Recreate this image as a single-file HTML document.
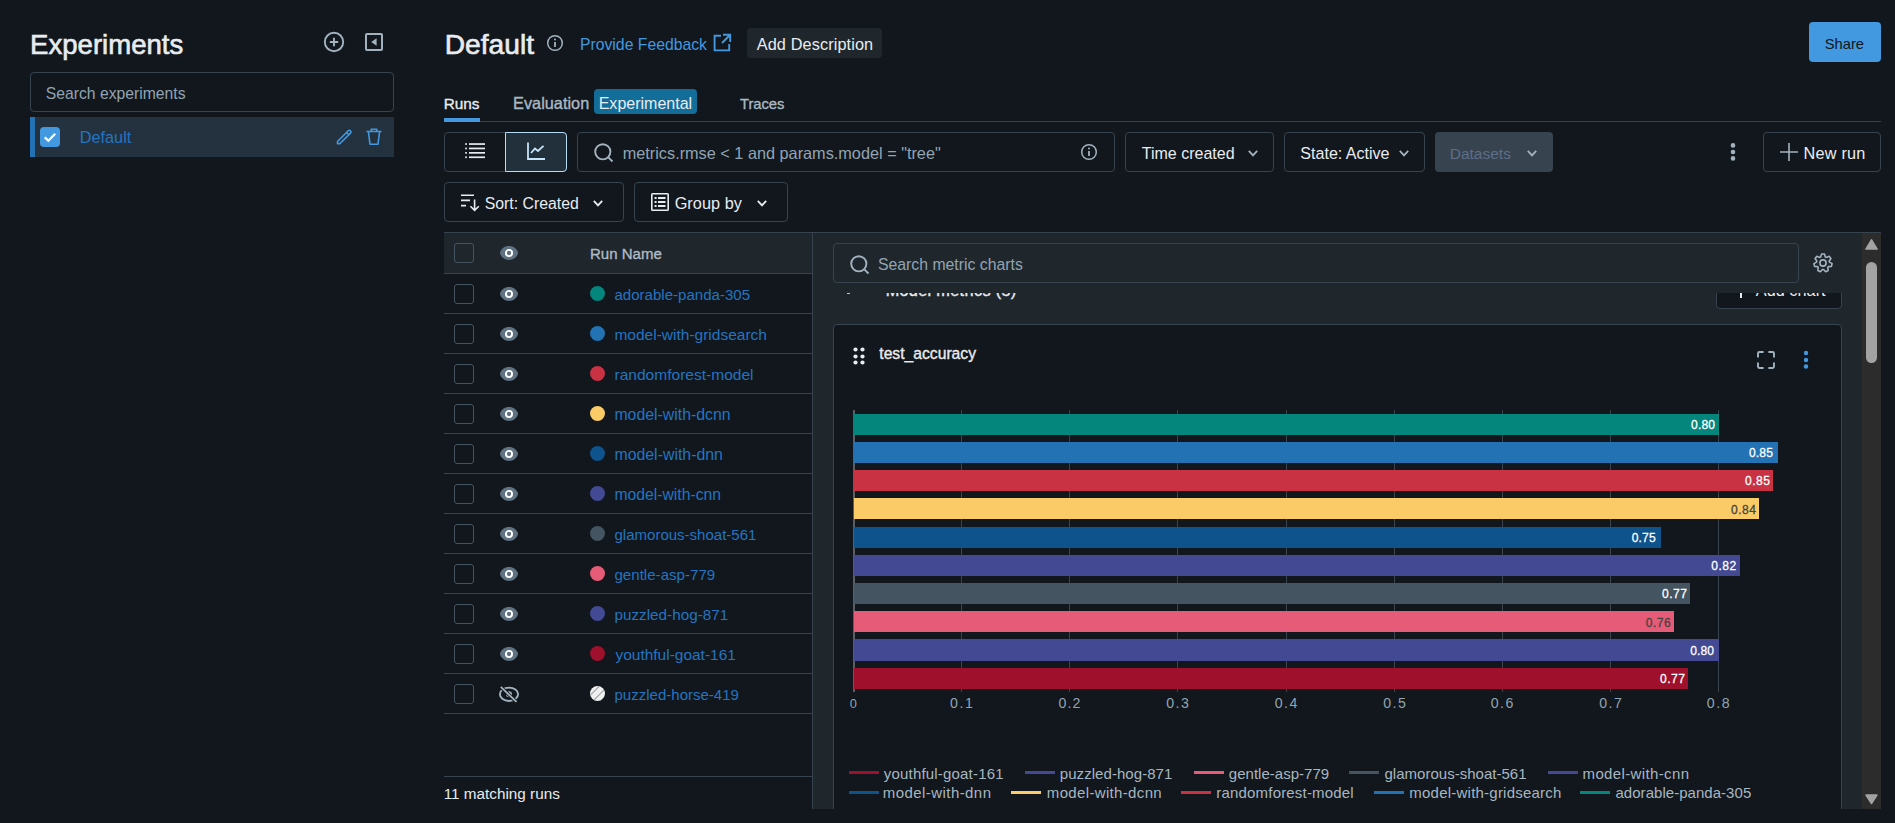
<!DOCTYPE html>
<html><head><meta charset="utf-8"><title>MLflow Experiments</title>
<style>
html,body{margin:0;padding:0;width:1895px;height:823px;overflow:hidden;background:#11171c;font-family:"Liberation Sans",sans-serif;}
.a{position:absolute;display:block}
.t{position:absolute;white-space:pre;line-height:1}
</style></head><body>
<svg class="a" style="left:323px;top:31px;" width="22" height="22" viewBox="0 0 22 22"><circle cx="11" cy="11" r="9.2" fill="none" stroke="#a2b2be" stroke-width="1.9"/><path d="M6.8 11H15.2M11 6.8V15.2" stroke="#a2b2be" stroke-width="1.9"/></svg>
<svg class="a" style="left:364px;top:32px;" width="20" height="20" viewBox="0 0 20 20"><rect x="2" y="2" width="16" height="16" rx="1" fill="none" stroke="#a2b2be" stroke-width="2"/><path d="M7.2 10L12.6 6.2V13.8Z" fill="#a2b2be"/></svg>
<div class="a" style="left:30px;top:72px;width:364px;height:40px;box-sizing:border-box;border:1px solid #37444f;border-radius:4px"></div>
<div class="a" style="left:30px;top:117px;width:364px;height:40px;background:#24323f"></div>
<div class="a" style="left:30px;top:117px;width:5px;height:40px;background:#2272b4"></div>
<div class="a" style="left:40px;top:127px;width:20px;height:20px;background:#4299e0;border-radius:4px"></div>
<svg class="a" style="left:40px;top:127px;" width="20" height="20" viewBox="0 0 20 20"><path d="M4.8 10.4L8.4 13.8L15.2 6.8" fill="none" stroke="#fff" stroke-width="2.2"/></svg>
<svg class="a" style="left:335px;top:127px;" width="18" height="19" viewBox="0 0 18 19"><path d="M2.5 14.5L13.2 3.8a1.6 1.6 0 0 1 2.3 2.3L4.8 16.8H2.5Z M11.5 5.5L13.8 7.8" fill="none" stroke="#4299e0" stroke-width="1.6" stroke-linejoin="round"/></svg>
<svg class="a" style="left:365px;top:127px;" width="18" height="19" viewBox="0 0 18 19"><path d="M1.5 4.5H16.5 M6.2 4.5V2.2H11.8V4.5 M3.4 4.5L5 17.2H13L14.6 4.5" fill="none" stroke="#4299e0" stroke-width="1.6" stroke-linejoin="round"/></svg>
<svg class="a" style="left:546px;top:34px;" width="18" height="18" viewBox="0 0 18 18"><circle cx="9" cy="9" r="7.3" fill="none" stroke="#a2b2be" stroke-width="1.5"/><path d="M9 8V13" stroke="#a2b2be" stroke-width="1.8"/><circle cx="9" cy="5.6" r="1" fill="#a2b2be"/></svg>
<svg class="a" style="left:712px;top:33px;" width="20" height="20" viewBox="0 0 20 20"><path d="M9 2.8H2.6V17.4H17.2V11 M11 1.8H18.2V9 M18 2L10 10" fill="none" stroke="#4299e0" stroke-width="1.9"/></svg>
<div class="a" style="left:747px;top:28px;width:135px;height:30px;background:#1f272d;border-radius:4px"></div>
<div class="a" style="left:1809px;top:22px;width:72px;height:40px;background:#4299e0;border-radius:4px"></div>
<div class="a" style="left:594px;top:89px;width:103px;height:25px;background:#136d99;border-radius:4px"></div>
<div class="a" style="left:444px;top:121px;width:1437px;height:1px;background:#37444f"></div>
<div class="a" style="left:444px;top:118px;width:36px;height:4px;background:#4299e0"></div>
<div class="a" style="left:444px;top:132px;width:123px;height:40px;box-sizing:border-box;border:1px solid #37444f;border-radius:4px"></div>
<div class="a" style="left:505px;top:132px;width:62px;height:40px;box-sizing:border-box;background:#22303c;border:1px solid #b6dcf4;border-radius:0 4px 4px 0"></div>
<svg class="a" style="left:463px;top:141px;" width="24" height="20" viewBox="0 0 24 20"><g fill="#e8ecf0"><rect x="2.2" y="2.2" width="1.7" height="1.7"/><rect x="2.2" y="6.6" width="1.7" height="1.7"/><rect x="2.2" y="11" width="1.7" height="1.7"/><rect x="2.2" y="15.4" width="1.7" height="1.7"/><rect x="6" y="2.2" width="16" height="1.7"/><rect x="6" y="6.6" width="16" height="1.7"/><rect x="6" y="11" width="16" height="1.7"/><rect x="6" y="15.4" width="16" height="1.7"/></g></svg>
<svg class="a" style="left:525px;top:140px;" width="22" height="22" viewBox="0 0 22 22"><path d="M3 2.5V19H20 M6 13L10 8.5L13 11L18.5 5.8" fill="none" stroke="#c5e5fa" stroke-width="1.8"/></svg>
<div class="a" style="left:577px;top:132px;width:538px;height:40px;box-sizing:border-box;border:1px solid #37444f;border-radius:4px"></div>
<svg class="a" style="left:592px;top:141px;" width="24" height="24" viewBox="0 0 24 24"><circle cx="10.8" cy="10.8" r="7.6" fill="none" stroke="#a2b2be" stroke-width="1.9"/><path d="M16.3 16.3L20.5 20.5" stroke="#a2b2be" stroke-width="1.9"/></svg>
<svg class="a" style="left:1080px;top:143px;" width="18" height="18" viewBox="0 0 18 18"><circle cx="9" cy="9" r="7.3" fill="none" stroke="#a2b2be" stroke-width="1.5"/><path d="M9 8V13" stroke="#a2b2be" stroke-width="1.8"/><circle cx="9" cy="5.6" r="1" fill="#a2b2be"/></svg>
<div class="a" style="left:1125px;top:132px;width:149px;height:40px;box-sizing:border-box;border:1px solid #37444f;border-radius:4px"></div>
<svg class="a" style="left:1247px;top:149px;" width="12" height="8" viewBox="0 0 12 8"><path d="M1.8 1.8L6.0 6.4L10.2 1.8" fill="none" stroke="#a2b2be" stroke-width="1.8"/></svg>
<div class="a" style="left:1284px;top:132px;width:141px;height:40px;box-sizing:border-box;border:1px solid #37444f;border-radius:4px"></div>
<svg class="a" style="left:1398px;top:149px;" width="12" height="8" viewBox="0 0 12 8"><path d="M1.8 1.8L6.0 6.4L10.2 1.8" fill="none" stroke="#a2b2be" stroke-width="1.8"/></svg>
<div class="a" style="left:1435px;top:132px;width:118px;height:40px;background:#37444f;border-radius:4px"></div>
<svg class="a" style="left:1526px;top:149px;" width="12" height="8" viewBox="0 0 12 8"><path d="M1.8 1.8L6.0 6.4L10.2 1.8" fill="none" stroke="#a6b3be" stroke-width="1.8"/></svg>
<svg class="a" style="left:1729px;top:141px;" width="8" height="22" viewBox="0 0 8 22"><circle cx="4" cy="4.4" r="2.3" fill="#a2b2be"/><circle cx="4" cy="11" r="2.3" fill="#a2b2be"/><circle cx="4" cy="17.4" r="2.3" fill="#a2b2be"/></svg>
<div class="a" style="left:1763px;top:132px;width:118px;height:40px;box-sizing:border-box;border:1px solid #37444f;border-radius:4px"></div>
<svg class="a" style="left:1779px;top:142px;" width="20" height="20" viewBox="0 0 20 20"><path d="M10 1V19M1 10H19" stroke="#a2b2be" stroke-width="1.6"/></svg>
<div class="a" style="left:444px;top:182px;width:180px;height:40px;box-sizing:border-box;border:1px solid #37444f;border-radius:4px"></div>
<svg class="a" style="left:460px;top:193px;" width="21" height="20" viewBox="0 0 21 20"><path d="M1 2.2H14 M1 7.4H10 M1 12.6H6 M14.6 6.6V17.6 M10.4 13.2L14.6 17.4L18.8 13.2" fill="none" stroke="#e8ecf0" stroke-width="1.6"/></svg>
<svg class="a" style="left:592px;top:199px;" width="12" height="8" viewBox="0 0 12 8"><path d="M1.8 1.8L6.0 6.4L10.2 1.8" fill="none" stroke="#e8ecf0" stroke-width="1.8"/></svg>
<div class="a" style="left:634px;top:182px;width:154px;height:40px;box-sizing:border-box;border:1px solid #37444f;border-radius:4px"></div>
<svg class="a" style="left:650px;top:192px;" width="20" height="20" viewBox="0 0 20 20"><rect x="1.8" y="1.8" width="16.4" height="16.4" rx="0.8" fill="none" stroke="#e8ecf0" stroke-width="1.6"/><g fill="#e8ecf0"><rect x="4.6" y="5" width="2" height="2"/><rect x="4.6" y="9" width="2" height="2"/><rect x="4.6" y="13" width="2" height="2"/><rect x="8" y="5" width="7.5" height="2"/><rect x="8" y="9" width="7.5" height="2"/><rect x="8" y="13" width="7.5" height="2"/></g></svg>
<svg class="a" style="left:756px;top:199px;" width="12" height="8" viewBox="0 0 12 8"><path d="M1.8 1.8L6.0 6.4L10.2 1.8" fill="none" stroke="#e8ecf0" stroke-width="1.8"/></svg>
<div class="a" style="left:813px;top:233px;width:1068px;height:576px;background:#1f272d"></div>
<div class="a" style="left:444px;top:233px;width:368px;height:40px;background:#1f272d"></div>
<div class="a" style="left:444px;top:232px;width:1437px;height:1px;background:#37444f"></div>
<div class="a" style="left:812px;top:232px;width:1px;height:577px;background:#37444f"></div>
<div class="a" style="left:444px;top:273px;width:368px;height:1px;background:#37444f"></div>
<div class="a" style="left:444px;top:313px;width:368px;height:1px;background:#37444f"></div>
<div class="a" style="left:444px;top:353px;width:368px;height:1px;background:#37444f"></div>
<div class="a" style="left:444px;top:393px;width:368px;height:1px;background:#37444f"></div>
<div class="a" style="left:444px;top:433px;width:368px;height:1px;background:#37444f"></div>
<div class="a" style="left:444px;top:473px;width:368px;height:1px;background:#37444f"></div>
<div class="a" style="left:444px;top:513px;width:368px;height:1px;background:#37444f"></div>
<div class="a" style="left:444px;top:553px;width:368px;height:1px;background:#37444f"></div>
<div class="a" style="left:444px;top:593px;width:368px;height:1px;background:#37444f"></div>
<div class="a" style="left:444px;top:633px;width:368px;height:1px;background:#37444f"></div>
<div class="a" style="left:444px;top:673px;width:368px;height:1px;background:#37444f"></div>
<div class="a" style="left:444px;top:713px;width:368px;height:1px;background:#37444f"></div>
<div class="a" style="left:444px;top:776px;width:368px;height:1px;background:#37444f"></div>
<div class="a" style="left:454px;top:243px;width:20px;height:20px;box-sizing:border-box;border:1px solid #445461;border-radius:3px"></div>
<svg class="a" style="left:499px;top:245px;" width="20" height="16" viewBox="0 0 20 16"><path d="M0.9 8C2.2 3.6 5.6 1.1 10 1.1S17.8 3.6 19.1 8C17.8 12.4 14.4 14.9 10 14.9S2.2 12.4 0.9 8Z" fill="#5f7281"/><circle cx="10" cy="8" r="3.1" fill="none" stroke="#fff" stroke-width="1.9"/></svg>
<div class="a" style="left:454px;top:284px;width:20px;height:20px;box-sizing:border-box;border:1px solid #445461;border-radius:3px"></div>
<svg class="a" style="left:499px;top:286px;" width="20" height="16" viewBox="0 0 20 16"><path d="M0.9 8C2.2 3.6 5.6 1.1 10 1.1S17.8 3.6 19.1 8C17.8 12.4 14.4 14.9 10 14.9S2.2 12.4 0.9 8Z" fill="#5f7281"/><circle cx="10" cy="8" r="3.1" fill="none" stroke="#fff" stroke-width="1.9"/></svg>
<svg class="a" style="left:590px;top:286px;" width="15" height="15" viewBox="0 0 15 15"><circle cx="7.5" cy="7.5" r="7.5" fill="#04867d"/></svg>
<div class="a" style="left:454px;top:324px;width:20px;height:20px;box-sizing:border-box;border:1px solid #445461;border-radius:3px"></div>
<svg class="a" style="left:499px;top:326px;" width="20" height="16" viewBox="0 0 20 16"><path d="M0.9 8C2.2 3.6 5.6 1.1 10 1.1S17.8 3.6 19.1 8C17.8 12.4 14.4 14.9 10 14.9S2.2 12.4 0.9 8Z" fill="#5f7281"/><circle cx="10" cy="8" r="3.1" fill="none" stroke="#fff" stroke-width="1.9"/></svg>
<svg class="a" style="left:590px;top:326px;" width="15" height="15" viewBox="0 0 15 15"><circle cx="7.5" cy="7.5" r="7.5" fill="#2272b4"/></svg>
<div class="a" style="left:454px;top:364px;width:20px;height:20px;box-sizing:border-box;border:1px solid #445461;border-radius:3px"></div>
<svg class="a" style="left:499px;top:366px;" width="20" height="16" viewBox="0 0 20 16"><path d="M0.9 8C2.2 3.6 5.6 1.1 10 1.1S17.8 3.6 19.1 8C17.8 12.4 14.4 14.9 10 14.9S2.2 12.4 0.9 8Z" fill="#5f7281"/><circle cx="10" cy="8" r="3.1" fill="none" stroke="#fff" stroke-width="1.9"/></svg>
<svg class="a" style="left:590px;top:366px;" width="15" height="15" viewBox="0 0 15 15"><circle cx="7.5" cy="7.5" r="7.5" fill="#c83243"/></svg>
<div class="a" style="left:454px;top:404px;width:20px;height:20px;box-sizing:border-box;border:1px solid #445461;border-radius:3px"></div>
<svg class="a" style="left:499px;top:406px;" width="20" height="16" viewBox="0 0 20 16"><path d="M0.9 8C2.2 3.6 5.6 1.1 10 1.1S17.8 3.6 19.1 8C17.8 12.4 14.4 14.9 10 14.9S2.2 12.4 0.9 8Z" fill="#5f7281"/><circle cx="10" cy="8" r="3.1" fill="none" stroke="#fff" stroke-width="1.9"/></svg>
<svg class="a" style="left:590px;top:406px;" width="15" height="15" viewBox="0 0 15 15"><circle cx="7.5" cy="7.5" r="7.5" fill="#facb66"/></svg>
<div class="a" style="left:454px;top:444px;width:20px;height:20px;box-sizing:border-box;border:1px solid #445461;border-radius:3px"></div>
<svg class="a" style="left:499px;top:446px;" width="20" height="16" viewBox="0 0 20 16"><path d="M0.9 8C2.2 3.6 5.6 1.1 10 1.1S17.8 3.6 19.1 8C17.8 12.4 14.4 14.9 10 14.9S2.2 12.4 0.9 8Z" fill="#5f7281"/><circle cx="10" cy="8" r="3.1" fill="none" stroke="#fff" stroke-width="1.9"/></svg>
<svg class="a" style="left:590px;top:446px;" width="15" height="15" viewBox="0 0 15 15"><circle cx="7.5" cy="7.5" r="7.5" fill="#0e538b"/></svg>
<div class="a" style="left:454px;top:484px;width:20px;height:20px;box-sizing:border-box;border:1px solid #445461;border-radius:3px"></div>
<svg class="a" style="left:499px;top:486px;" width="20" height="16" viewBox="0 0 20 16"><path d="M0.9 8C2.2 3.6 5.6 1.1 10 1.1S17.8 3.6 19.1 8C17.8 12.4 14.4 14.9 10 14.9S2.2 12.4 0.9 8Z" fill="#5f7281"/><circle cx="10" cy="8" r="3.1" fill="none" stroke="#fff" stroke-width="1.9"/></svg>
<svg class="a" style="left:590px;top:486px;" width="15" height="15" viewBox="0 0 15 15"><circle cx="7.5" cy="7.5" r="7.5" fill="#434a93"/></svg>
<div class="a" style="left:454px;top:524px;width:20px;height:20px;box-sizing:border-box;border:1px solid #445461;border-radius:3px"></div>
<svg class="a" style="left:499px;top:526px;" width="20" height="16" viewBox="0 0 20 16"><path d="M0.9 8C2.2 3.6 5.6 1.1 10 1.1S17.8 3.6 19.1 8C17.8 12.4 14.4 14.9 10 14.9S2.2 12.4 0.9 8Z" fill="#5f7281"/><circle cx="10" cy="8" r="3.1" fill="none" stroke="#fff" stroke-width="1.9"/></svg>
<svg class="a" style="left:590px;top:526px;" width="15" height="15" viewBox="0 0 15 15"><circle cx="7.5" cy="7.5" r="7.5" fill="#445461"/></svg>
<div class="a" style="left:454px;top:564px;width:20px;height:20px;box-sizing:border-box;border:1px solid #445461;border-radius:3px"></div>
<svg class="a" style="left:499px;top:566px;" width="20" height="16" viewBox="0 0 20 16"><path d="M0.9 8C2.2 3.6 5.6 1.1 10 1.1S17.8 3.6 19.1 8C17.8 12.4 14.4 14.9 10 14.9S2.2 12.4 0.9 8Z" fill="#5f7281"/><circle cx="10" cy="8" r="3.1" fill="none" stroke="#fff" stroke-width="1.9"/></svg>
<svg class="a" style="left:590px;top:566px;" width="15" height="15" viewBox="0 0 15 15"><circle cx="7.5" cy="7.5" r="7.5" fill="#e65b77"/></svg>
<div class="a" style="left:454px;top:604px;width:20px;height:20px;box-sizing:border-box;border:1px solid #445461;border-radius:3px"></div>
<svg class="a" style="left:499px;top:606px;" width="20" height="16" viewBox="0 0 20 16"><path d="M0.9 8C2.2 3.6 5.6 1.1 10 1.1S17.8 3.6 19.1 8C17.8 12.4 14.4 14.9 10 14.9S2.2 12.4 0.9 8Z" fill="#5f7281"/><circle cx="10" cy="8" r="3.1" fill="none" stroke="#fff" stroke-width="1.9"/></svg>
<svg class="a" style="left:590px;top:606px;" width="15" height="15" viewBox="0 0 15 15"><circle cx="7.5" cy="7.5" r="7.5" fill="#434a93"/></svg>
<div class="a" style="left:454px;top:644px;width:20px;height:20px;box-sizing:border-box;border:1px solid #445461;border-radius:3px"></div>
<svg class="a" style="left:499px;top:646px;" width="20" height="16" viewBox="0 0 20 16"><path d="M0.9 8C2.2 3.6 5.6 1.1 10 1.1S17.8 3.6 19.1 8C17.8 12.4 14.4 14.9 10 14.9S2.2 12.4 0.9 8Z" fill="#5f7281"/><circle cx="10" cy="8" r="3.1" fill="none" stroke="#fff" stroke-width="1.9"/></svg>
<svg class="a" style="left:590px;top:646px;" width="15" height="15" viewBox="0 0 15 15"><circle cx="7.5" cy="7.5" r="7.5" fill="#9e102c"/></svg>
<div class="a" style="left:454px;top:684px;width:20px;height:20px;box-sizing:border-box;border:1px solid #445461;border-radius:3px"></div>
<svg class="a" style="left:498px;top:685px;" width="22" height="19" viewBox="0 0 22 19"><ellipse cx="11" cy="9.3" rx="9.1" ry="6.7" fill="none" stroke="#a2b2be" stroke-width="1.9"/><circle cx="11" cy="9.3" r="3" fill="#a2b2be"/><path d="M3 2.2L18.3 16.8" stroke="#11171c" stroke-width="3.6"/><path d="M2.8 1.9L18.5 16.9" stroke="#a2b2be" stroke-width="1.9"/></svg>
<svg class="a" style="left:590px;top:686px;" width="15" height="15" viewBox="0 0 15 15"><defs><clipPath id="cp"><circle cx="7.5" cy="7.5" r="7.5"/></clipPath></defs><g clip-path="url(#cp)"><rect width="15" height="15" fill="#eef0f2"/><path d="M-3 6L6 -3M-1.5 11L11 -1.5M2 16L16 2M6.5 19L19 6.5" stroke="#a3a3a3" stroke-width="1.2"/></g></svg>
<div class="a" style="left:813px;top:293px;width:1048px;height:40px;overflow:hidden">
<div class="a" style="left:33.5px;top:0px;width:3px;height:1px;background:#b8c2ca"></div>
<div class="a" style="left:903px;top:-20px;width:126px;height:36px;box-sizing:border-box;border:1px solid #37444f;border-radius:4px;background:#11171c"></div>
<div class="a" style="left:927px;top:-10px;width:1.8px;height:15px;background:#e8ecf0"></div>
<div id="t_mm" class="t" style="left:72.66px;top:-11.00px;font-size:16.275px;font-weight:400;-webkit-text-stroke:0.37px #e8ecf0;color:#e8ecf0;letter-spacing:0.310px;">Model metrics (5)</div>
<div id="t_addchart" class="t" style="left:942.81px;top:-11.00px;font-size:16.275px;font-weight:400;color:#e8ecf0;letter-spacing:0.022px;">Add chart</div>
</div>
<div class="a" style="left:833px;top:243px;width:966px;height:40px;box-sizing:border-box;border:1px solid #37444f;border-radius:4px"></div>
<svg class="a" style="left:848px;top:253px;" width="24" height="24" viewBox="0 0 24 24"><circle cx="10.8" cy="10.8" r="7.6" fill="none" stroke="#a2b2be" stroke-width="1.9"/><path d="M16.3 16.3L20.5 20.5" stroke="#a2b2be" stroke-width="1.9"/></svg>
<svg class="a" style="left:1813px;top:253px;" width="20" height="20" viewBox="0 0 20 20"><path d="M7.67 3.93 L8.58 1.01 L11.42 1.01 L12.33 3.93 L13.29 4.40 L16.14 3.28 L17.91 5.51 L16.20 8.04 L16.43 9.08 L19.08 10.61 L18.45 13.39 L15.40 13.62 L14.73 14.46 L15.18 17.48 L12.62 18.72 L10.53 16.48 L9.47 16.48 L7.38 18.72 L4.82 17.48 L5.27 14.46 L4.60 13.62 L1.55 13.39 L0.92 10.61 L3.57 9.08 L3.80 8.04 L2.09 5.51 L3.86 3.28 L6.71 4.40Z" fill="none" stroke="#a2b2be" stroke-width="1.6" stroke-linejoin="round"/><circle cx="10" cy="10" r="3.1" fill="none" stroke="#a2b2be" stroke-width="1.6"/></svg>
<div class="a" style="left:813px;top:233px;width:1048px;height:576px;overflow:hidden">
<div class="a" style="left:20px;top:91px;width:1009px;height:600px;box-sizing:border-box;border:1px solid #37444f;border-radius:4px;background:#11171c"></div>
</div>
<svg class="a" style="left:852.5px;top:347.0px;" width="5" height="5" viewBox="0 0 5 5"><circle cx="2.5" cy="2.5" r="2.1" fill="#e8ecf0"/></svg>
<svg class="a" style="left:852.5px;top:353.7px;" width="5" height="5" viewBox="0 0 5 5"><circle cx="2.5" cy="2.5" r="2.1" fill="#e8ecf0"/></svg>
<svg class="a" style="left:852.5px;top:360.3px;" width="5" height="5" viewBox="0 0 5 5"><circle cx="2.5" cy="2.5" r="2.1" fill="#e8ecf0"/></svg>
<svg class="a" style="left:860.0px;top:347.0px;" width="5" height="5" viewBox="0 0 5 5"><circle cx="2.5" cy="2.5" r="2.1" fill="#e8ecf0"/></svg>
<svg class="a" style="left:860.0px;top:353.7px;" width="5" height="5" viewBox="0 0 5 5"><circle cx="2.5" cy="2.5" r="2.1" fill="#e8ecf0"/></svg>
<svg class="a" style="left:860.0px;top:360.3px;" width="5" height="5" viewBox="0 0 5 5"><circle cx="2.5" cy="2.5" r="2.1" fill="#e8ecf0"/></svg>
<svg class="a" style="left:1756px;top:350px;" width="21" height="21" viewBox="0 0 21 21"><path d="M2 7.6V3.4Q2 2 3.4 2H7.6 M12.4 2H16.6Q18 2 18 3.4V7.6 M18 12.4V16.6Q18 18 16.6 18H12.4 M7.6 18H3.4Q2 18 2 16.6V12.4" fill="none" stroke="#a2b2be" stroke-width="1.9"/></svg>
<svg class="a" style="left:1802px;top:349px;" width="8" height="22" viewBox="0 0 8 22"><circle cx="4" cy="4" r="2.2" fill="#4299e0"/><circle cx="4" cy="11" r="2.2" fill="#4299e0"/><circle cx="4" cy="17.5" r="2.2" fill="#4299e0"/></svg>
<div class="a" style="left:853px;top:410px;width:1.6px;height:282px;background:#5b5f63"></div>
<div class="a" style="left:961px;top:410px;width:1px;height:282px;background:#3a444d"></div>
<div class="a" style="left:1069px;top:410px;width:1px;height:282px;background:#3a444d"></div>
<div class="a" style="left:1177px;top:410px;width:1px;height:282px;background:#3a444d"></div>
<div class="a" style="left:1286px;top:410px;width:1px;height:282px;background:#3a444d"></div>
<div class="a" style="left:1394px;top:410px;width:1px;height:282px;background:#3a444d"></div>
<div class="a" style="left:1502px;top:410px;width:1px;height:282px;background:#3a444d"></div>
<div class="a" style="left:1610px;top:410px;width:1px;height:282px;background:#3a444d"></div>
<div class="a" style="left:1718px;top:410px;width:1px;height:282px;background:#3a444d"></div>
<div class="a" style="left:853.6px;top:413.6px;width:865.9px;height:21.2px;background:#04867d"></div>
<div class="a" style="left:853.6px;top:441.83px;width:924.3px;height:21.2px;background:#2272b4"></div>
<div class="a" style="left:853.6px;top:470.06px;width:919.6px;height:21.2px;background:#c83243"></div>
<div class="a" style="left:853.6px;top:498.29px;width:905.6px;height:21.2px;background:#facb66"></div>
<div class="a" style="left:853.6px;top:526.52px;width:807.2px;height:21.2px;background:#0e538b"></div>
<div class="a" style="left:853.6px;top:554.75px;width:886.7px;height:21.2px;background:#434a93"></div>
<div class="a" style="left:853.6px;top:582.98px;width:836.6px;height:21.2px;background:#445461"></div>
<div class="a" style="left:853.6px;top:611.21px;width:820.5px;height:21.2px;background:#e65b77"></div>
<div class="a" style="left:853.6px;top:639.44px;width:865.0px;height:21.2px;background:#434a93"></div>
<div class="a" style="left:853.6px;top:667.67px;width:834.6px;height:21.2px;background:#9e102c"></div>
<div class="a" style="left:849px;top:771.1px;width:30px;height:3.2px;background:#9e102c"></div>
<div class="a" style="left:1025px;top:771.1px;width:30px;height:3.2px;background:#434a93"></div>
<div class="a" style="left:1194px;top:771.1px;width:30px;height:3.2px;background:#e65b77"></div>
<div class="a" style="left:1349px;top:771.1px;width:30px;height:3.2px;background:#445461"></div>
<div class="a" style="left:1548px;top:771.1px;width:30px;height:3.2px;background:#434a93"></div>
<div class="a" style="left:849px;top:790.8px;width:30px;height:3.2px;background:#0e538b"></div>
<div class="a" style="left:1011px;top:790.8px;width:30px;height:3.2px;background:#facb66"></div>
<div class="a" style="left:1181px;top:790.8px;width:30px;height:3.2px;background:#c83243"></div>
<div class="a" style="left:1374px;top:790.8px;width:30px;height:3.2px;background:#2272b4"></div>
<div class="a" style="left:1580px;top:790.8px;width:30px;height:3.2px;background:#04867d"></div>
<div class="a" style="left:1862px;top:233px;width:19px;height:576px;background:#2c2c2c"></div>
<svg class="a" style="left:1864px;top:237px;" width="15" height="14" viewBox="0 0 15 14"><path d="M1.5 12.2L7.5 2.2L13.5 12.2Z" fill="#a3a3a3" stroke="#a3a3a3" stroke-width="1" stroke-linejoin="round"/></svg>
<div class="a" style="left:1866px;top:262px;width:11px;height:101px;background:#a3a3a3;border-radius:5.5px"></div>
<svg class="a" style="left:1864px;top:793px;" width="15" height="14" viewBox="0 0 15 14"><path d="M2 2L7.5 10.6L13 2Z" fill="#a3a3a3" stroke="#a3a3a3" stroke-width="1.4" stroke-linejoin="round"/></svg>
<div id="t_exp" class="t" style="left:30.07px;top:31.00px;font-size:27.579px;font-weight:400;-webkit-text-stroke:0.63px #e8ecf0;color:#e8ecf0;letter-spacing:0.000px;">Experiments</div>
<div id="t_sexp" class="t" style="left:45.75px;top:86.00px;font-size:15.726px;font-weight:400;color:#92a4b3;letter-spacing:0.000px;">Search experiments</div>
<div id="t_sdef" class="t" style="left:79.86px;top:129.00px;font-size:16.222px;font-weight:400;color:#2474c2;letter-spacing:0.000px;">Default</div>
<div id="t_def" class="t" style="left:444.72px;top:30.00px;font-size:28.204px;font-weight:400;-webkit-text-stroke:0.65px #e8ecf0;color:#e8ecf0;letter-spacing:0.000px;">Default</div>
<div id="t_fb" class="t" style="left:579.99px;top:37.00px;font-size:15.751px;font-weight:400;color:#4299e0;letter-spacing:0.000px;">Provide Feedback</div>
<div id="t_adddesc" class="t" style="left:756.72px;top:36.00px;font-size:16.275px;font-weight:400;color:#e8ecf0;letter-spacing:0.113px;">Add Description</div>
<div id="t_share" class="t" style="left:1824.75px;top:37.00px;font-size:14.744px;font-weight:400;color:#11171c;letter-spacing:0.000px;">Share</div>
<div id="t_runs" class="t" style="left:443.67px;top:96.00px;font-size:15.326px;font-weight:400;-webkit-text-stroke:0.35px #e8ecf0;color:#e8ecf0;letter-spacing:0.000px;">Runs</div>
<div id="t_eval" class="t" style="left:513.09px;top:95.00px;font-size:16.275px;font-weight:400;-webkit-text-stroke:0.37px #a9b8c3;color:#a9b8c3;letter-spacing:0.020px;">Evaluation</div>
<div id="t_expl" class="t" style="left:598.69px;top:95.00px;font-size:16.024px;font-weight:400;color:#e8ecf0;letter-spacing:0.000px;">Experimental</div>
<div id="t_traces" class="t" style="left:739.96px;top:97.00px;font-size:14.742px;font-weight:400;-webkit-text-stroke:0.34px #a9b8c3;color:#a9b8c3;letter-spacing:0.000px;">Traces</div>
<div id="t_q" class="t" style="left:622.72px;top:145.00px;font-size:16.270px;font-weight:400;color:#92a4b3;letter-spacing:0.000px;">metrics.rmse &lt; 1 and params.model = &quot;tree&quot;</div>
<div id="t_time" class="t" style="left:1141.76px;top:145.00px;font-size:16.022px;font-weight:400;color:#e8ecf0;letter-spacing:0.000px;">Time created</div>
<div id="t_state" class="t" style="left:1300.35px;top:145.00px;font-size:16.056px;font-weight:400;color:#e8ecf0;letter-spacing:0.000px;">State: Active</div>
<div id="t_ds" class="t" style="left:1449.75px;top:146.00px;font-size:15.500px;font-weight:400;color:#5e6d88;letter-spacing:0.000px;">Datasets</div>
<div id="t_newrun" class="t" style="left:1803.52px;top:145.00px;font-size:16.275px;font-weight:400;color:#e8ecf0;letter-spacing:0.204px;">New run</div>
<div id="t_sort" class="t" style="left:484.70px;top:196.00px;font-size:15.847px;font-weight:400;color:#e8ecf0;letter-spacing:0.000px;">Sort: Created</div>
<div id="t_group" class="t" style="left:674.67px;top:195.00px;font-size:16.275px;font-weight:400;color:#e8ecf0;letter-spacing:0.053px;">Group by</div>
<div id="t_runname" class="t" style="left:589.99px;top:246.00px;font-size:15.036px;font-weight:400;-webkit-text-stroke:0.35px #aebbc5;color:#aebbc5;letter-spacing:0.000px;">Run Name</div>
<div id="t_run0" class="t" style="left:614.50px;top:287.00px;font-size:15.057px;font-weight:400;color:#2474c2;letter-spacing:0.000px;">adorable-panda-305</div>
<div id="t_run1" class="t" style="left:614.46px;top:327.00px;font-size:15.503px;font-weight:400;color:#2474c2;letter-spacing:0.000px;">model-with-gridsearch</div>
<div id="t_run2" class="t" style="left:614.46px;top:367.00px;font-size:15.562px;font-weight:400;color:#2474c2;letter-spacing:0.000px;">randomforest-model</div>
<div id="t_run3" class="t" style="left:614.42px;top:407.00px;font-size:15.851px;font-weight:400;color:#2474c2;letter-spacing:0.000px;">model-with-dcnn</div>
<div id="t_run4" class="t" style="left:614.46px;top:447.00px;font-size:15.875px;font-weight:400;color:#2474c2;letter-spacing:0.000px;">model-with-dnn</div>
<div id="t_run5" class="t" style="left:614.46px;top:487.00px;font-size:15.739px;font-weight:400;color:#2474c2;letter-spacing:0.000px;">model-with-cnn</div>
<div id="t_run6" class="t" style="left:614.50px;top:527.00px;font-size:15.035px;font-weight:400;color:#2474c2;letter-spacing:0.000px;">glamorous-shoat-561</div>
<div id="t_run7" class="t" style="left:614.46px;top:567.00px;font-size:15.111px;font-weight:400;color:#2474c2;letter-spacing:0.000px;">gentle-asp-779</div>
<div id="t_run8" class="t" style="left:614.49px;top:607.00px;font-size:15.285px;font-weight:400;color:#2474c2;letter-spacing:0.000px;">puzzled-hog-871</div>
<div id="t_run9" class="t" style="left:615.46px;top:647.00px;font-size:15.476px;font-weight:400;color:#2474c2;letter-spacing:0.000px;">youthful-goat-161</div>
<div id="t_run10" class="t" style="left:614.46px;top:687.00px;font-size:15.041px;font-weight:400;color:#2474c2;letter-spacing:0.000px;">puzzled-horse-419</div>
<div id="t_match" class="t" style="left:443.75px;top:786.00px;font-size:15.295px;font-weight:400;color:#e8ecf0;letter-spacing:0.000px;">11 matching runs</div>
<div id="t_smc" class="t" style="left:877.92px;top:257.00px;font-size:15.828px;font-weight:400;color:#92a4b3;letter-spacing:0.000px;">Search metric charts</div>
<div id="t_title" class="t" style="left:879.31px;top:346.00px;font-size:15.685px;font-weight:400;-webkit-text-stroke:0.36px #e8ecf0;color:#e8ecf0;letter-spacing:0.000px;">test_accuracy</div>
<div id="t_bl0" class="t" style="left:1691.08px;top:419.00px;font-size:12.075px;font-weight:400;-webkit-text-stroke:0.28px #fff;color:#fff;letter-spacing:0.136px;">0.80</div>
<div id="t_bl1" class="t" style="left:1749.04px;top:447.00px;font-size:12.075px;font-weight:400;-webkit-text-stroke:0.28px #fff;color:#fff;letter-spacing:0.135px;">0.85</div>
<div id="t_bl2" class="t" style="left:1745.03px;top:475.00px;font-size:12.075px;font-weight:400;-webkit-text-stroke:0.28px #fff;color:#fff;letter-spacing:0.468px;">0.85</div>
<div id="t_bl3" class="t" style="left:1731.03px;top:504.00px;font-size:12.075px;font-weight:400;-webkit-text-stroke:0.28px #444;color:#444;letter-spacing:0.468px;">0.84</div>
<div id="t_bl4" class="t" style="left:1631.77px;top:532.00px;font-size:12.075px;font-weight:400;-webkit-text-stroke:0.28px #fff;color:#fff;letter-spacing:0.135px;">0.75</div>
<div id="t_bl5" class="t" style="left:1711.30px;top:560.00px;font-size:12.075px;font-weight:400;-webkit-text-stroke:0.28px #fff;color:#fff;letter-spacing:0.468px;">0.82</div>
<div id="t_bl6" class="t" style="left:1662.03px;top:588.00px;font-size:12.075px;font-weight:400;-webkit-text-stroke:0.28px #fff;color:#fff;letter-spacing:0.468px;">0.77</div>
<div id="t_bl7" class="t" style="left:1645.72px;top:617.00px;font-size:12.075px;font-weight:400;-webkit-text-stroke:0.28px #444;color:#444;letter-spacing:0.468px;">0.76</div>
<div id="t_bl8" class="t" style="left:1690.24px;top:645.00px;font-size:12.075px;font-weight:400;-webkit-text-stroke:0.28px #fff;color:#fff;letter-spacing:0.114px;">0.80</div>
<div id="t_bl9" class="t" style="left:1660.03px;top:673.00px;font-size:12.075px;font-weight:400;-webkit-text-stroke:0.28px #fff;color:#fff;letter-spacing:0.468px;">0.77</div>
<div id="t_tick0" class="t" style="left:849.74px;top:698.00px;font-size:12.825px;font-weight:400;color:#92a4b3;letter-spacing:0.000px;">0</div>
<div id="t_tick1" class="t" style="left:950.07px;top:696.00px;font-size:14.175px;font-weight:400;color:#92a4b3;letter-spacing:1.559px;">0.1</div>
<div id="t_tick2" class="t" style="left:1058.62px;top:696.00px;font-size:14.175px;font-weight:400;color:#92a4b3;letter-spacing:1.050px;">0.2</div>
<div id="t_tick3" class="t" style="left:1166.13px;top:696.00px;font-size:14.175px;font-weight:400;color:#92a4b3;letter-spacing:1.550px;">0.3</div>
<div id="t_tick4" class="t" style="left:1274.66px;top:696.00px;font-size:14.175px;font-weight:400;color:#92a4b3;letter-spacing:1.516px;">0.4</div>
<div id="t_tick5" class="t" style="left:1383.20px;top:696.00px;font-size:14.175px;font-weight:400;color:#92a4b3;letter-spacing:1.516px;">0.5</div>
<div id="t_tick6" class="t" style="left:1490.70px;top:696.00px;font-size:14.175px;font-weight:400;color:#92a4b3;letter-spacing:1.525px;">0.6</div>
<div id="t_tick7" class="t" style="left:1599.23px;top:696.00px;font-size:14.175px;font-weight:400;color:#92a4b3;letter-spacing:1.506px;">0.7</div>
<div id="t_tick8" class="t" style="left:1706.76px;top:696.00px;font-size:14.175px;font-weight:400;color:#92a4b3;letter-spacing:1.550px;">0.8</div>
<div id="t_lg0" class="t" style="left:883.86px;top:766.00px;font-size:15.015px;font-weight:400;color:#a8b6c1;letter-spacing:0.183px;">youthful-goat-161</div>
<div id="t_lg1" class="t" style="left:1059.82px;top:766.00px;font-size:15.015px;font-weight:400;color:#a8b6c1;letter-spacing:0.057px;">puzzled-hog-871</div>
<div id="t_lg2" class="t" style="left:1228.83px;top:766.00px;font-size:15.015px;font-weight:400;color:#a8b6c1;letter-spacing:0.019px;">gentle-asp-779</div>
<div id="t_lg3" class="t" style="left:1384.49px;top:766.00px;font-size:15.015px;font-weight:400;color:#a8b6c1;letter-spacing:0.018px;">glamorous-shoat-561</div>
<div id="t_lg4" class="t" style="left:1582.55px;top:766.00px;font-size:15.015px;font-weight:400;color:#a8b6c1;letter-spacing:0.365px;">model-with-cnn</div>
<div id="t_lg5" class="t" style="left:882.81px;top:785.00px;font-size:15.015px;font-weight:400;color:#a8b6c1;letter-spacing:0.434px;">model-with-dnn</div>
<div id="t_lg6" class="t" style="left:1046.83px;top:785.00px;font-size:15.015px;font-weight:400;color:#a8b6c1;letter-spacing:0.343px;">model-with-dcnn</div>
<div id="t_lg7" class="t" style="left:1216.30px;top:785.00px;font-size:15.015px;font-weight:400;color:#a8b6c1;letter-spacing:0.186px;">randomforest-model</div>
<div id="t_lg8" class="t" style="left:1409.30px;top:785.00px;font-size:15.015px;font-weight:400;color:#a8b6c1;letter-spacing:0.227px;">model-with-gridsearch</div>
<div id="t_lg9" class="t" style="left:1615.49px;top:785.00px;font-size:15.015px;font-weight:400;color:#a8b6c1;letter-spacing:0.037px;">adorable-panda-305</div>
</body></html>
